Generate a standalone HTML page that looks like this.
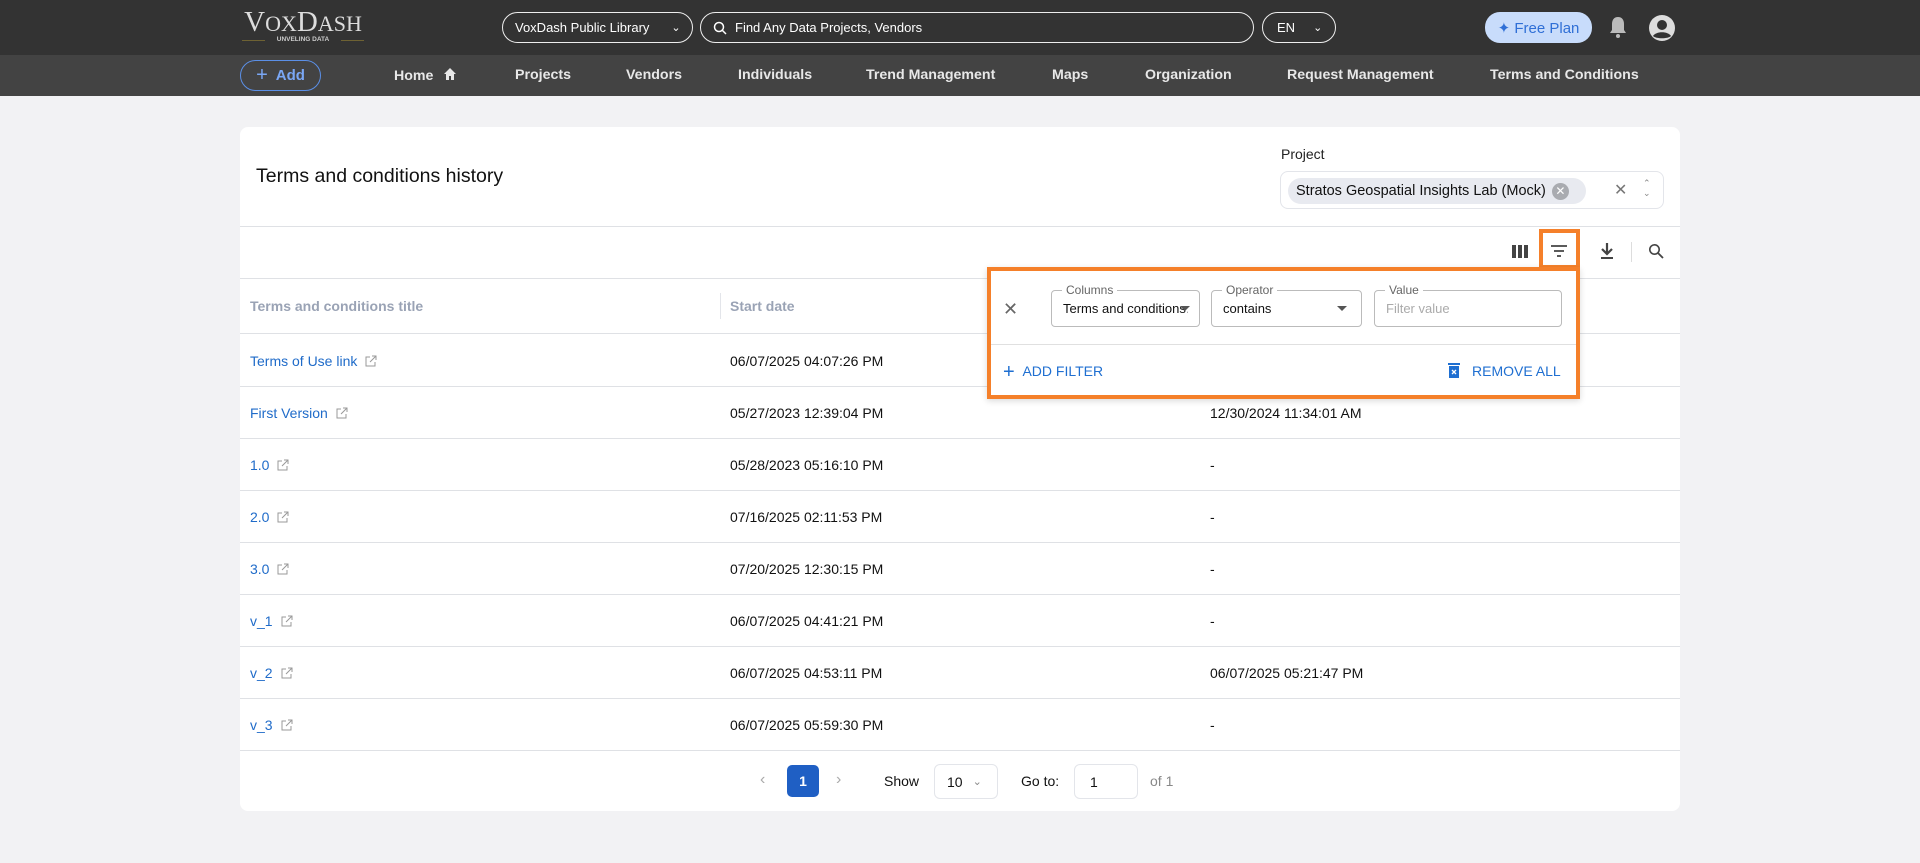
<!DOCTYPE html>
<html><head><meta charset="utf-8"><style>
*{box-sizing:border-box;margin:0;padding:0}
body{width:1920px;height:863px;background:#f2f2f4;font-family:"Liberation Sans",sans-serif;position:relative;overflow:hidden;color:#111}
.a{position:absolute}
.top{left:0;top:0;width:1920px;height:55px;background:#333}
.nav{left:0;top:55px;width:1920px;height:41px;background:#434343}
.pill{border:1.5px solid #eee;border-radius:16px;color:#fff;font-size:13px;display:flex;align-items:center}
.ni{top:67px;color:#e8e8e8;font-size:14.2px;font-weight:bold}
.card{left:240px;top:127px;width:1440px;height:684px;background:#fff;border-radius:8px}
.hl{height:1px;background:#dfe1e5}
.row{left:250px;font-size:14px}
.lnk{color:#1f6bc9}
.ext{display:inline-block;vertical-align:-1px;margin-left:8px}
.field{border:1px solid #bbb;border-radius:4px;height:37px}
.lab{font-size:12px;color:#666;background:#fff;padding:0 4px;top:-8px;left:10px}
</style></head><body>
<div class="a top"></div>
<div class="a nav"></div>
<div class="a" style="left:240px;top:6px;width:126px;text-align:center;color:#ddd;font-family:'Liberation Serif',serif;font-size:29px;letter-spacing:0">V<span style="font-size:22px">OX</span>D<span style="font-size:22px">ASH</span></div>
<div class="a" style="left:242px;top:40px;width:122px;height:1px;background:#6e6233"></div>
<div class="a" style="left:265px;top:36px;width:76px;background:#333;color:#ccc;font-size:6.5px;font-weight:bold;text-align:center">UNVELING DATA</div>
<div class="a pill" style="left:502px;top:12px;width:191px;height:31px;padding-left:12px">VoxDash Public Library<span style="margin-left:22px;font-size:11px">&#8964;</span></div>
<div class="a pill" style="left:700px;top:12px;width:554px;height:31px;padding-left:12px"><svg width="14" height="14" viewBox="0 0 14 14"><circle cx="6" cy="6" r="4.5" fill="none" stroke="#fff" stroke-width="1.5"/><path d="M9.5 9.5L13 13" stroke="#fff" stroke-width="1.5"/></svg><span style="margin-left:8px">Find Any Data Projects, Vendors</span></div>
<div class="a pill" style="left:1262px;top:12px;width:74px;height:31px;padding-left:14px">EN<span style="margin-left:18px;font-size:11px">&#8964;</span></div>
<div class="a" style="left:1485px;top:12px;width:107px;height:31px;background:#c8dcfb;border-radius:15px;color:#2f6fd6;font-size:15px;display:flex;align-items:center;justify-content:center">&#10022;&nbsp;Free Plan</div>
<svg class="a" style="left:1608px;top:15px" width="20" height="24" viewBox="0 0 20 24"><path d="M10 2c-4 0-6 3-6 7v6l-2 3h16l-2-3V9c0-4-2-7-6-7z" fill="#bbb"/><circle cx="10" cy="21" r="2" fill="#bbb"/></svg>
<svg class="a" style="left:1648px;top:14px" width="28" height="28" viewBox="0 0 28 28"><circle cx="14" cy="14" r="13" fill="#ddd"/><circle cx="14" cy="11" r="5" fill="#333"/><path d="M5 22c3-5 15-5 18 0c-3 3-15 3-18 0z" fill="#333"/></svg>
<div class="a" style="left:240px;top:60px;width:81px;height:31px;border:1.5px solid #5b8fe6;border-radius:16px;color:#7aa7f5;font-size:15px;font-weight:bold;display:flex;align-items:center;justify-content:center"><span style="font-size:20px;font-weight:normal;margin-right:8px">+</span>Add</div>
<div class="a ni" style="left:394px">Home &#8203;<svg width="14" height="14" viewBox="0 0 14 14" style="vertical-align:-1px;margin-left:6px"><path d="M7 1L1 7h2v6h3V9h2v4h3V7h2z" fill="#e8e8e8"/></svg></div>
<div class="a ni" style="left:515px">Projects</div>
<div class="a ni" style="left:626px">Vendors</div>
<div class="a ni" style="left:738px">Individuals</div>
<div class="a ni" style="left:866px">Trend Management</div>
<div class="a ni" style="left:1052px">Maps</div>
<div class="a ni" style="left:1145px">Organization</div>
<div class="a ni" style="left:1287px">Request Management</div>
<div class="a ni" style="left:1490px">Terms and Conditions</div>

<div class="a card"></div>
<div class="a" style="left:256px;top:165px;font-size:19.5px">Terms and conditions history</div>
<div class="a" style="left:1281px;top:146px;font-size:14px;color:#222">Project</div>
<div class="a" style="left:1280px;top:171px;width:384px;height:38px;border:1px solid #e3e5ea;border-radius:8px"></div>
<div class="a" style="left:1288px;top:178px;height:26px;width:298px;background:#e8eaf0;border-radius:13px;font-size:14.5px;display:flex;align-items:center;padding-left:8px">Stratos Geospatial Insights Lab (Mock)<span style="margin-left:6px;width:17px;height:17px;border-radius:50%;background:#a9abb0;color:#fff;font-size:12px;display:inline-flex;align-items:center;justify-content:center">&#10005;</span></div>
<div class="a" style="left:1614px;top:180px;color:#777;font-size:16px">&#10005;</div>
<div class="a" style="left:1643px;top:178px;color:#888;font-size:9px;line-height:10px">&#8963;<br>&#8964;</div>
<div class="a hl" style="left:240px;top:226px;width:1440px"></div>
<svg class="a" style="left:1512px;top:245px" width="16" height="13"><rect x="0" y="0" width="4" height="13" fill="#444"/><rect x="6" y="0" width="4" height="13" fill="#444"/><rect x="12" y="0" width="4" height="13" fill="#444"/></svg>
<svg class="a" style="left:1550px;top:244px" width="18" height="14"><path d="M1 2h16M4 7h10M7 12h4" stroke="#444" stroke-width="1.8"/></svg>
<svg class="a" style="left:1600px;top:242px" width="14" height="18"><path d="M7 1v10M2 7l5 5 5-5" stroke="#444" stroke-width="2.2" fill="none"/><path d="M1 16h12" stroke="#444" stroke-width="2"/></svg>
<div class="a" style="left:1631px;top:242px;width:1px;height:20px;background:#ddd"></div>
<svg class="a" style="left:1648px;top:243px" width="16" height="16"><circle cx="6.5" cy="6.5" r="4.7" fill="none" stroke="#444" stroke-width="1.6"/><path d="M10 10l5 5" stroke="#444" stroke-width="1.8"/></svg>
<div class="a" style="left:1539px;top:229px;width:41px;height:40px;border:4px solid #f5802a"></div>

<div class="a hl" style="left:240px;top:278px;width:1440px"></div>
<div class="a" style="left:250px;top:298px;font-size:14px;color:#9aa3b5;font-weight:bold">Terms and conditions title</div>
<div class="a" style="left:720px;top:293px;width:1px;height:26px;background:#e3e5ea"></div>
<div class="a" style="left:730px;top:298px;font-size:14px;color:#9aa3b5;font-weight:bold">Start date</div>
<div class="a hl" style="left:240px;top:333px;width:1440px"></div>

<div class="a row lnk" style="top:353px">Terms of Use link<svg class="ext" width="12" height="12"><path d="M5 2H1v9h9V7M7 1h4v4M11 1L5 7" stroke="#999" fill="none"/></svg></div>
<div class="a row" style="left:730px;top:353px">06/07/2025 04:07:26 PM</div>
<div class="a hl" style="left:240px;top:386px;width:1440px"></div>
<div class="a row lnk" style="top:405px">First Version<svg class="ext" width="12" height="12"><path d="M5 2H1v9h9V7M7 1h4v4M11 1L5 7" stroke="#999" fill="none"/></svg></div>
<div class="a row" style="left:730px;top:405px">05/27/2023 12:39:04 PM</div>
<div class="a row" style="left:1210px;top:405px">12/30/2024 11:34:01 AM</div>
<div class="a hl" style="left:240px;top:438px;width:1440px"></div>
<div class="a row lnk" style="top:457px">1.0<svg class="ext" width="12" height="12"><path d="M5 2H1v9h9V7M7 1h4v4M11 1L5 7" stroke="#999" fill="none"/></svg></div>
<div class="a row" style="left:730px;top:457px">05/28/2023 05:16:10 PM</div>
<div class="a row" style="left:1210px;top:457px">-</div>
<div class="a hl" style="left:240px;top:490px;width:1440px"></div>
<div class="a row lnk" style="top:509px">2.0<svg class="ext" width="12" height="12"><path d="M5 2H1v9h9V7M7 1h4v4M11 1L5 7" stroke="#999" fill="none"/></svg></div>
<div class="a row" style="left:730px;top:509px">07/16/2025 02:11:53 PM</div>
<div class="a row" style="left:1210px;top:509px">-</div>
<div class="a hl" style="left:240px;top:542px;width:1440px"></div>
<div class="a row lnk" style="top:561px">3.0<svg class="ext" width="12" height="12"><path d="M5 2H1v9h9V7M7 1h4v4M11 1L5 7" stroke="#999" fill="none"/></svg></div>
<div class="a row" style="left:730px;top:561px">07/20/2025 12:30:15 PM</div>
<div class="a row" style="left:1210px;top:561px">-</div>
<div class="a hl" style="left:240px;top:594px;width:1440px"></div>
<div class="a row lnk" style="top:613px">v_1<svg class="ext" width="12" height="12"><path d="M5 2H1v9h9V7M7 1h4v4M11 1L5 7" stroke="#999" fill="none"/></svg></div>
<div class="a row" style="left:730px;top:613px">06/07/2025 04:41:21 PM</div>
<div class="a row" style="left:1210px;top:613px">-</div>
<div class="a hl" style="left:240px;top:646px;width:1440px"></div>
<div class="a row lnk" style="top:665px">v_2<svg class="ext" width="12" height="12"><path d="M5 2H1v9h9V7M7 1h4v4M11 1L5 7" stroke="#999" fill="none"/></svg></div>
<div class="a row" style="left:730px;top:665px">06/07/2025 04:53:11 PM</div>
<div class="a row" style="left:1210px;top:665px">06/07/2025 05:21:47 PM</div>
<div class="a hl" style="left:240px;top:698px;width:1440px"></div>
<div class="a row lnk" style="top:717px">v_3<svg class="ext" width="12" height="12"><path d="M5 2H1v9h9V7M7 1h4v4M11 1L5 7" stroke="#999" fill="none"/></svg></div>
<div class="a row" style="left:730px;top:717px">06/07/2025 05:59:30 PM</div>
<div class="a row" style="left:1210px;top:717px">-</div>
<div class="a hl" style="left:240px;top:750px;width:1440px"></div>

<div class="a" style="left:760px;top:771px;color:#aaa;font-size:16px">&#8249;</div>
<div class="a" style="left:787px;top:765px;width:32px;height:32px;background:#1f5fc4;border-radius:5px;color:#fff;font-size:14px;font-weight:bold;display:flex;align-items:center;justify-content:center">1</div>
<div class="a" style="left:836px;top:771px;color:#aaa;font-size:16px">&#8250;</div>
<div class="a" style="left:884px;top:773px;font-size:14px">Show</div>
<div class="a" style="left:934px;top:764px;width:64px;height:35px;border:1px solid #e3e5ea;border-radius:6px;font-size:14px;display:flex;align-items:center;padding-left:12px">10<span style="margin-left:10px;color:#888;font-size:11px">&#8964;</span></div>
<div class="a" style="left:1021px;top:773px;font-size:14px">Go to:</div>
<div class="a" style="left:1074px;top:764px;width:64px;height:35px;border:1px solid #e3e5ea;border-radius:6px;font-size:14px;padding:9px 0 0 15px">1</div>
<div class="a" style="left:1150px;top:773px;font-size:14px;color:#888">of 1</div>

<div class="a" style="left:987px;top:267px;width:593px;height:132px;background:#fff;border:4px solid #f5802a;box-shadow:0 2px 6px rgba(0,0,0,.15)"></div>
<div class="a" style="left:1003px;top:299px;color:#666;font-size:18px">&#10005;</div>
<div class="a field" style="left:1051px;top:290px;width:149px"><div class="a lab">Columns</div><div class="a" style="left:11px;top:10px;font-size:13px;white-space:nowrap;width:125px;overflow:hidden">Terms and conditions…</div><div class="a" style="left:128px;top:15px;border:5px solid transparent;border-top-color:#555"></div></div>
<div class="a field" style="left:1211px;top:290px;width:151px"><div class="a lab">Operator</div><div class="a" style="left:11px;top:10px;font-size:13px">contains</div><div class="a" style="left:125px;top:15px;border:5px solid transparent;border-top-color:#555"></div></div>
<div class="a field" style="left:1374px;top:290px;width:188px"><div class="a lab">Value</div><div class="a" style="left:11px;top:10px;font-size:13px;color:#aaa">Filter value</div></div>
<div class="a" style="left:991px;top:344px;width:585px;height:1px;background:#e0e0e0"></div>
<div class="a" style="left:1003px;top:361px;color:#1f6fd1;font-size:14px"><span style="font-size:20px;vertical-align:-2px">+</span>&nbsp;&nbsp;ADD FILTER</div>
<svg class="a" style="left:1448px;top:362px" width="12" height="16"><rect x="0" y="1" width="12" height="2" fill="#1f6fd1"/><rect x="1" y="4" width="10" height="12" fill="#1f6fd1"/><path d="M4 8l4 4M8 8l-4 4" stroke="#fff" stroke-width="1.3"/></svg>
<div class="a" style="left:1472px;top:363px;color:#1f6fd1;font-size:14px">REMOVE ALL</div>
</body></html>
